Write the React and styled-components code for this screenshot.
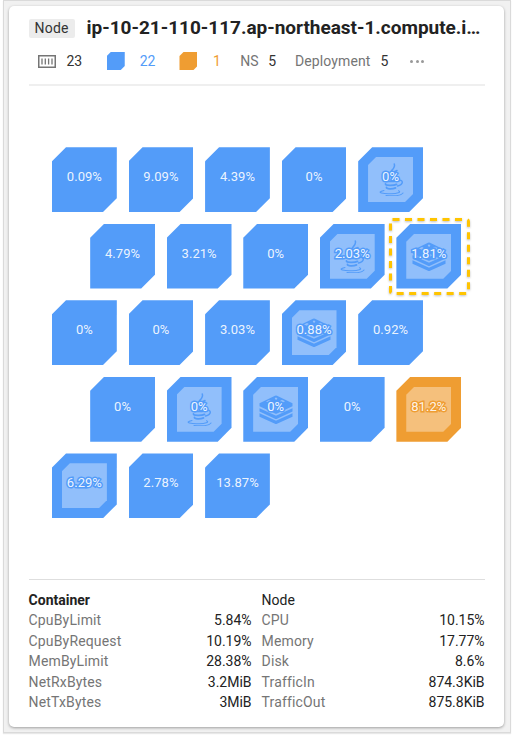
import React from "react";
import styled, { createGlobalStyle } from "styled-components";

const GlobalStyle = createGlobalStyle`
  * { box-sizing: border-box; }
  body { margin: 0; background: #fff; font-family: Roboto, sans-serif; overflow: hidden; }
`;

const BLUE = "#539cf9";
const ORANGE = "#ef9d32";

const Page = styled.div`
  width: 513px;
  height: 737px;
  padding: 0 2px 0 3px;
  background: #fff;
`;

const Frame = styled.div`
  height: 733px;
  padding: 5px 5px 0;
  background: #f1f1f1;
  border: 1px solid #dadada;
  box-shadow: 0 1px 1px #e8e8e8;
`;

const Card = styled.section`
  display: flex;
  flex-direction: column;
  height: 721px;
  width: 495px;
  padding: 0 19px 0 19.6px;
  background: #fff;
  border-radius: 5px;
  box-shadow: 0 1px 3px rgba(0, 0, 0, 0.35);
`;

const Header = styled.header`
  height: 80px;
  border-bottom: 2px solid #efefef;
`;

const TitleRow = styled.div`
  display: flex;
  align-items: center;
  gap: 12px;
  height: 20px;
  margin-top: 12px;
`;

const Tag = styled.span`
  width: 46px;
  height: 19px;
  border-radius: 2px;
  background: #ececec;
  color: #333;
  font-size: 14px;
  line-height: 19px;
  letter-spacing: 0.2px;
  text-align: center;
`;

const Title = styled.h1`
  margin: 0;
  color: #222;
  font-size: 19px;
  font-weight: 700;
  line-height: 20px;
  letter-spacing: -0.02px;
  white-space: nowrap;
`;

const Summary = styled.div`
  display: flex;
  align-items: center;
  height: 20px;
  margin-top: 13px;
  padding-left: 9.4px;
  font-size: 14px;
  line-height: 20px;
`;

const Count = styled.span`
  margin-left: ${(p) => p.$gap}px;
  color: ${(p) => p.$color || "#333"};
`;

const Label = styled.span`
  margin-left: ${(p) => p.$gap}px;
  color: #757575;
  letter-spacing: ${(p) => p.$spacing || 0}px;
`;

const Swatch = styled.i`
  width: 18px;
  height: 18px;
  margin-left: ${(p) => p.$gap}px;
  background: ${(p) => p.$color};
  clip-path: polygon(4px 0, 100% 0, 100% 14px, 14px 100%, 0 100%, 0 4px);
`;

const Dots = styled.span`
  display: flex;
  gap: 2.5px;
  margin-left: 22px;
  i { width: 3px; height: 3px; border-radius: 50%; background: #999; }
`;

const Map = styled.div`
  flex: 1;
  display: flex;
  flex-direction: column;
  gap: 11.75px;
  padding: 61.2px 0 0 23.4px;
`;

const MapRow = styled.div`
  display: flex;
  gap: 11.75px;
  padding-left: ${(p) => (p.$shifted ? 38.2 : 0)}px;
`;

const TileBox = styled.div`
  position: relative;
  display: grid;
  place-items: center;
  width: 64.8px;
  height: 64.8px;
`;

const Shape = styled.div`
  grid-area: 1 / 1;
  display: grid;
  place-items: center;
  width: 64.8px;
  height: 64.8px;
  background: ${(p) => p.$color};
  clip-path: polygon(14px 0, 100% 0, 100% 51px, 51px 100%, 0 100%, 0 14px);
`;

const Inset = styled.div`
  display: grid;
  place-items: center;
  width: 45px;
  height: 45px;
  background: rgba(255, 255, 255, 0.36);
  color: ${(p) => p.$color};
  clip-path: polygon(8px 0, 100% 0, 100% 37px, 37px 100%, 0 100%, 0 8px);
`;

const Value = styled.span`
  grid-area: 1 / 1;
  z-index: 1;
  margin-top: -5px;
  color: rgba(255, 255, 255, 0.9);
  font-size: 13px;
  line-height: 16px;
  letter-spacing: 0.05px;
  -webkit-text-stroke: ${(p) => (p.$halo ? `3px ${p.$halo}` : "0")};
  paint-order: stroke fill;
`;

const Selection = styled.svg`
  position: absolute;
  left: -7.5px;
  top: -6px;
  z-index: 2;
  overflow: visible;
  filter: drop-shadow(0 1px 1px rgba(0, 0, 0, 0.25));
`;

const Footer = styled.footer`
  display: grid;
  grid-template-columns: 223px 223px;
  gap: 10px;
  height: 148px;
  padding-top: 10px;
  border-top: 1px solid #dedede;
`;

const Metrics = styled.div`
  color: #222;
  font-size: 14px;
  line-height: 20.4px;
`;

const MetricTitle = styled.div`
  font-weight: ${(p) => (p.$bold ? 700 : 400)};
`;

const Metric = styled.div`
  display: flex;
  justify-content: space-between;
  span:first-child { color: #757575; letter-spacing: 0.15px; }
`;

const ContainerIcon = () => (
  <svg width="18" height="13" viewBox="0 0 18 13" fill="none" stroke="#757575">
    <rect x="0.75" y="0.75" width="16.5" height="11.5" strokeWidth="1.5" />
    <path d="M4 3.5v6M7.3 3.5v6M10.6 3.5v6M14 3.5v6" strokeWidth="1.3" />
  </svg>
);

const JavaIcon = () => (
  <svg width="26" height="33" viewBox="0 0 26 33" fill="none" stroke="currentColor" strokeLinecap="round">
    <path d="M16.300 1C18 6 11.500 7.500 12 11c.2 2 2.500 3 2.500 5M19 7.500c-4 1.500-5 3-3 5.500" strokeWidth="1.5" />
    <path d="M7 17.500c-3 1.300 12 1.600 14-.3M20.500 17.500c5-1.500 5.500 4-1 5.500" strokeWidth="1.4" />
    <path d="M7.500 21c0 1.800 8 1.800 11 .4M8.500 24.500c0 1.700 6 1.800 9 .4" strokeWidth="1.8" />
    <path d="M6 27.500c-9 2 0 3.500 7 3.200 6-.2 11-1.400 7.500-3M8 32.500c7 .6 15 .1 17-2.500" strokeWidth="1.1" />
  </svg>
);

const RedisIcon = () => (
  <svg width="34" height="29" viewBox="0 0 34 29" fill="currentColor">
    <path
      fillRule="evenodd"
      d="M.5 8.2 16 .8q1-.4 2 0l15.500 7.400v3L18 18.500q-1 .5-2 0L.5 11.200ZM17 2.300l-1.300 1.300 1.300 1.300 1.500-1.200ZM10 5l-3 1.400L10 7.800 13 6.400ZM23 4.800l-2.500 1.400L24 7.600l2-1.300ZM15 11l-3 1.700 5 2.300 4-1.700Z"
    />
    <path d="M.5 13.200 16 20.200q1 .5 2 0l15.500-7v3.400L18 23.700q-1 .5-2 0L.5 16.600Z" />
    <path d="M.5 18.300 16 25.300q1 .5 2 0l15.500-7v3.400L18 28.700q-1 .5-2 0L.5 21.700Z" />
  </svg>
);

const rows = [
  [["0.09%"], ["9.09%"], ["4.39%"], ["0%"], ["0%", "java"]],
  [["4.79%"], ["3.21%"], ["0%"], ["2.03%", "java"], ["1.81%", "redis", "selected"]],
  [["0%"], ["0%"], ["3.03%"], ["0.88%", "redis"], ["0.92%"]],
  [["0%"], ["0%", "java"], ["0%", "redis"], ["0%"], ["81.2%", "plain", "warning"]],
  [["6.29%", "plain"], ["2.78%"], ["13.87%"]],
];

function Tile({ value, kind, state }) {
  const color = state === "warning" ? ORANGE : BLUE;
  return (
    <TileBox>
      <Shape $color={color}>
        {kind && (
          <Inset $color={color}>
            {kind === "java" && <JavaIcon />}
            {kind === "redis" && <RedisIcon />}
          </Inset>
        )}
      </Shape>
      <Value $halo={kind && color}>{value}</Value>
      {state === "selected" && (
        <Selection width="81" height="77" fill="none">
          <rect x="1.5" y="1.5" width="78" height="74" rx="2" stroke="#ffc400" strokeWidth="3" strokeDasharray="7 5.5" />
        </Selection>
      )}
    </TileBox>
  );
}

function MetricList({ title, bold, items }) {
  return (
    <Metrics>
      <MetricTitle $bold={bold}>{title}</MetricTitle>
      {items.map(([name, value]) => (
        <Metric key={name}>
          <span>{name}</span>
          <span>{value}</span>
        </Metric>
      ))}
    </Metrics>
  );
}

export default function App() {
  return (
    <Page>
      <GlobalStyle />
      <Frame>
        <Card>
          <Header>
            <TitleRow>
              <Tag>Node</Tag>
              <Title>ip-10-21-110-117.ap-northeast-1.compute.i…</Title>
            </TitleRow>
            <Summary>
              <ContainerIcon />
              <Count $gap={10.5}>23</Count>
              <Swatch $gap={24.5} $color={BLUE} />
              <Count $gap={15} $color={BLUE}>22</Count>
              <Swatch $gap={24} $color={ORANGE} />
              <Count $gap={15.5} $color={ORANGE}>1</Count>
              <Label $gap={19.5}>NS</Label>
              <Count $gap={9.5}>5</Count>
              <Label $gap={19} $spacing={0.1}>Deployment</Label>
              <Count $gap={10}>5</Count>
              <Dots><i /><i /><i /></Dots>
            </Summary>
          </Header>
          <Map>
            {rows.map((row, r) => (
              <MapRow key={r} $shifted={r % 2 === 1}>
                {row.map(([value, kind, state], c) => (
                  <Tile key={c} value={value} kind={kind} state={state} />
                ))}
              </MapRow>
            ))}
          </Map>
          <Footer>
            <MetricList
              title="Container"
              bold
              items={[["CpuByLimit", "5.84%"], ["CpuByRequest", "10.19%"], ["MemByLimit", "28.38%"], ["NetRxBytes", "3.2MiB"], ["NetTxBytes", "3MiB"]]}
            />
            <MetricList
              title="Node"
              items={[["CPU", "10.15%"], ["Memory", "17.77%"], ["Disk", "8.6%"], ["TrafficIn", "874.3KiB"], ["TrafficOut", "875.8KiB"]]}
            />
          </Footer>
        </Card>
      </Frame>
    </Page>
  );
}
